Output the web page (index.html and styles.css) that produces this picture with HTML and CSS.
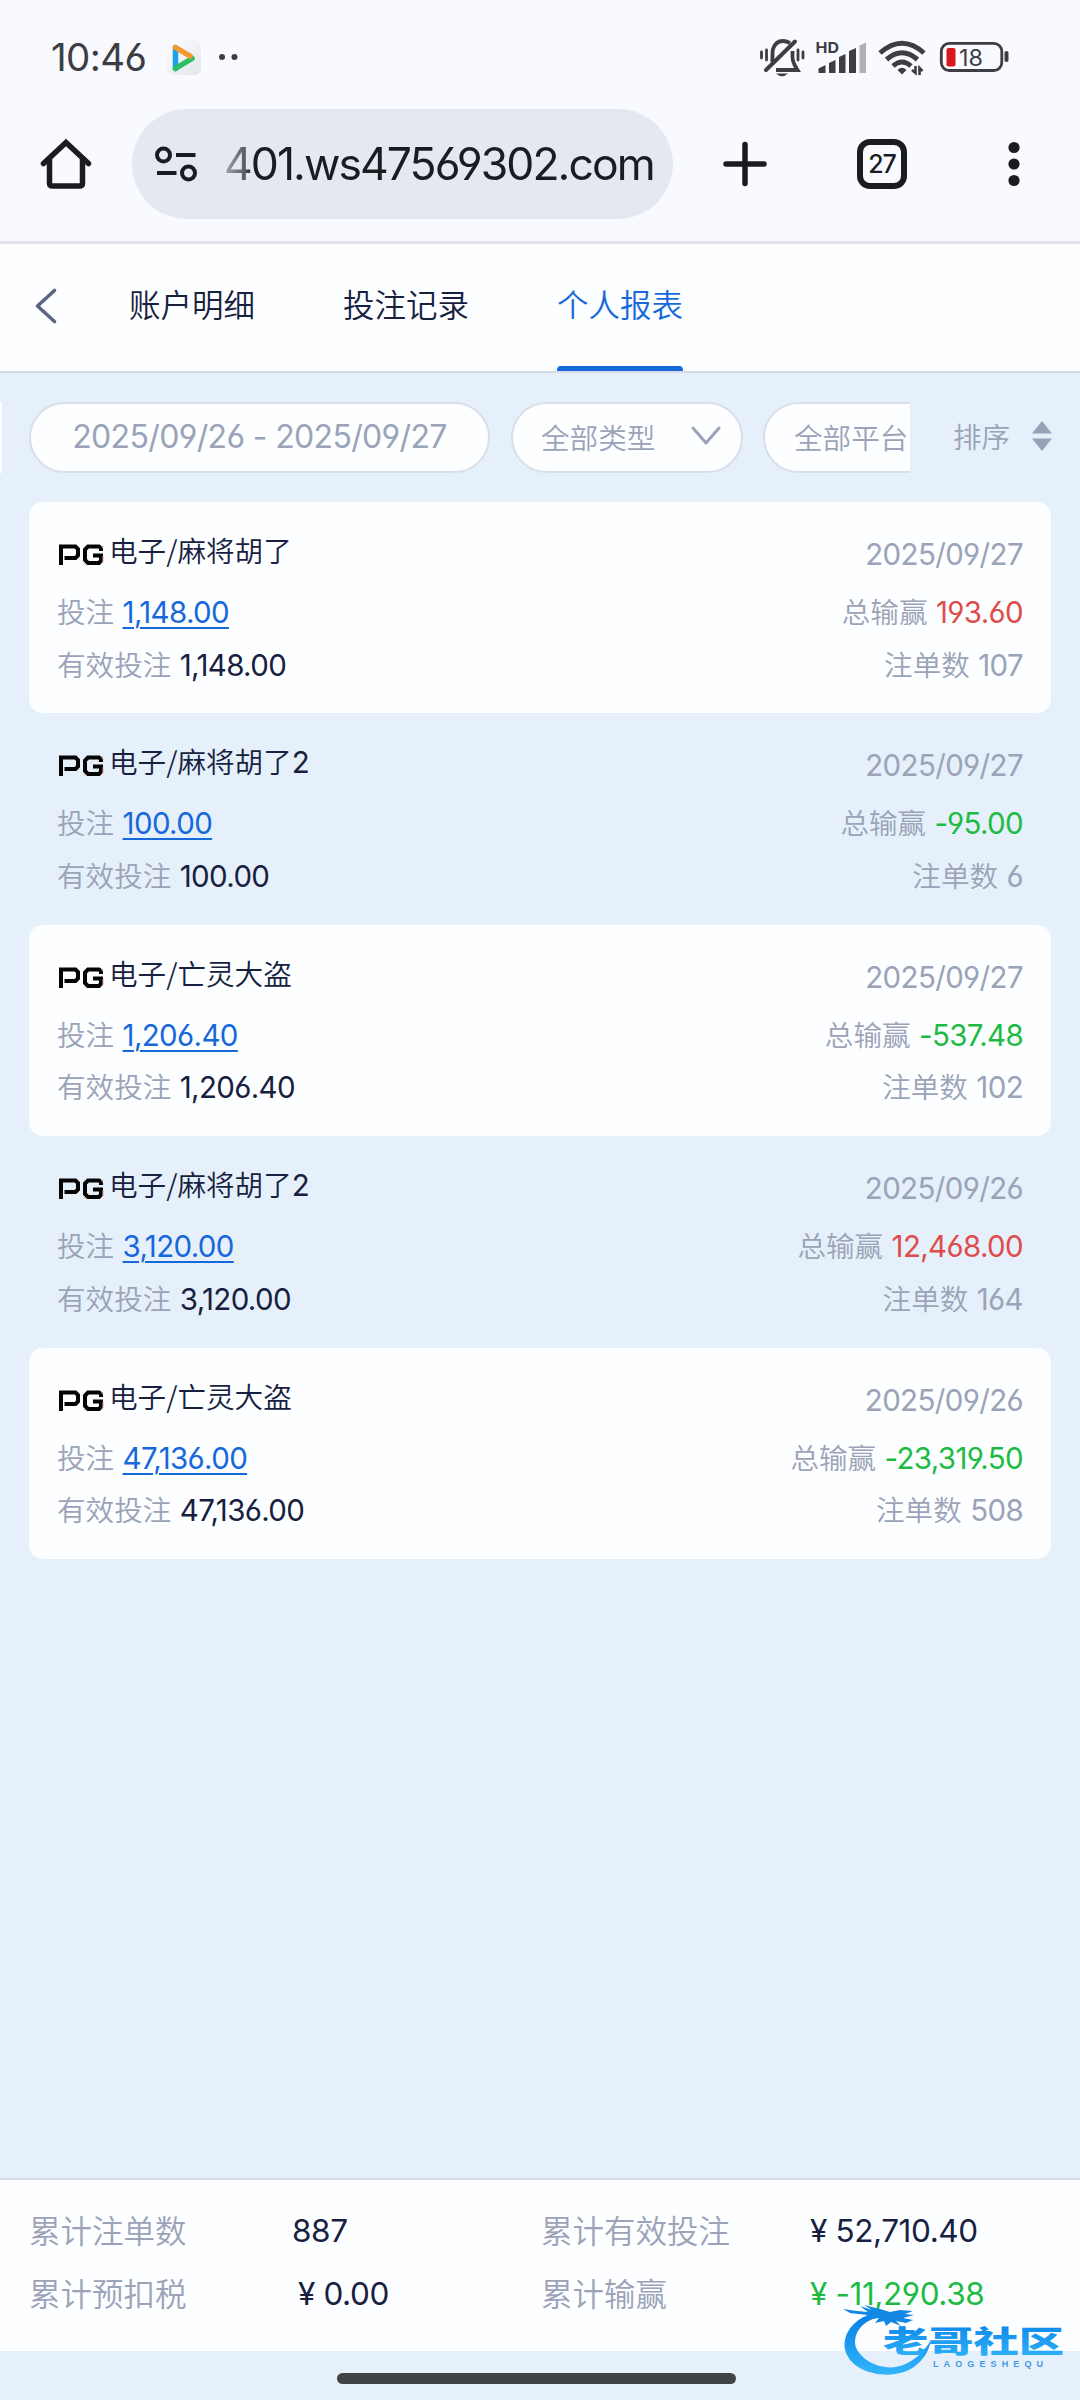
FILE: index.html
```html
<!DOCTYPE html>
<html lang="zh-CN">
<head>
<meta charset="utf-8">
<title>个人报表</title>
<link rel="stylesheet" href="styles.css">
</head>
<body>
<svg class="defs" width="0" height="0">
  <symbol id="pg" viewBox="0 0 46 22">
    <path d="M3 21V2.500H17.500L20 5V11.500L17.500 14H6.500" fill="none" stroke="#050505" stroke-width="4"/>
    <path d="M43 7V4L41 2.500H30L27 5.500V16L30 19H41L43 16.500V11.500H35" fill="none" stroke="#050505" stroke-width="4"/>
    <path d="M43.500 2.500l1.500 2M45 12v6l-3 3M26 19l3 2" fill="none" stroke="#e9a08c" stroke-width="1"/>
  </symbol>
</svg>

<div class="status">
  <span class="time">10:46</span>
  <svg class="status-left" width="76" height="40" viewBox="164 37 76 40">
    <defs><linearGradient id="tile" x1="0" y1="0" x2="1" y2="1"><stop offset="0" stop-color="#fdfdff"/><stop offset="1" stop-color="#e3e6ea"/></linearGradient></defs>
    <rect x="166" y="40" width="35" height="35" rx="7" fill="url(#tile)"/>
    <path d="M175.500 48V68.500" stroke="#1da0ea" stroke-width="5.500" stroke-linecap="round"/>
    <path d="M175.500 68.500L192 58.500" stroke="#2dbf63" stroke-width="5.500" stroke-linecap="round"/>
    <path d="M175.500 47.500L190 56" stroke="#f29a30" stroke-width="5.500" stroke-linecap="round"/>
    <circle cx="222" cy="57" r="3" fill="#3c3e44"/><circle cx="234.500" cy="57" r="3" fill="#3c3e44"/>
  </svg>
  <svg class="status-right" width="260" height="44" viewBox="755 36 260 44" fill="none" stroke="#3c3e44">
    <path d="M772 62C773 59 772 52 773 49C775 43 778 41 783 41C786 41 788 42 790 43M792.500 51C792 60 793 63 797.500 70H776" stroke-width="3.800"/>
    <path d="M766 70L795 41.500" stroke-width="4" stroke-linecap="round"/>
    <path d="M776 73.500H788Q782 79 776 73.500Z" fill="#3c3e44" stroke="none"/>
    <path d="M761.500 52V58M766.500 50V60M798 50V60M803 52V58" stroke-width="2.800" stroke-linecap="round"/>
    <text x="815.500" y="53" textLength="23.500" lengthAdjust="spacingAndGlyphs" class="hd">HD</text>
    <path d="M818.500 68.500L825.500 65V73H818.500ZM829 63L835.500 60V73H829ZM839 57L845.500 54V73H839ZM849 51L856 48V73H849Z" fill="#3c3e44" stroke="none"/>
    <path d="M859.500 45.500L866 42.500V73H859.500Z" fill="#b0b1b5" stroke="none"/>
    <path d="M880 53Q902 33.500 924 53M886.500 59.500Q902 46 917.500 59.500M893 66Q902 58 911 66" stroke-width="5"/>
    <path d="M897.500 70Q902 65.500 906.500 70L902 74.500Z" fill="#3c3e44" stroke="none"/>
    <path d="M912 70L915.500 73V66M922.500 71L919.500 68V75" stroke-width="2.600"/>
    <rect x="941.300" y="43.300" width="60.500" height="27.200" rx="8" stroke-width="2.800"/>
    <path d="M1006.500 53V60" stroke-width="4" stroke-linecap="round"/>
    <rect x="946.500" y="48" width="9" height="18.500" rx="2" fill="#d9161c" stroke="none"/>
    <text x="959" y="65.500" textLength="24" lengthAdjust="spacingAndGlyphs" class="batt">18</text>
  </svg>
</div>

<div class="browser">
  <svg class="home" width="56" height="56" viewBox="38 136 56 56" fill="none" stroke="#1b1c20" stroke-width="5.500">
    <path d="M43.500 163.500L66 142.500L88.500 163.500" stroke-linecap="round"/>
    <path d="M49.500 159V183Q49.500 186 52.500 186H79.500Q82.500 186 82.500 183V159"/>
  </svg>
  <div class="address">
    <svg width="44" height="40" viewBox="154 144 44 40" fill="none" stroke="#1b1c20" stroke-width="4">
      <circle cx="163.500" cy="155" r="6.500"/><circle cx="188.500" cy="173" r="6.500"/>
      <path d="M176 155H195.500M157 173H176.500"/>
    </svg>
    <span class="url">401.ws47569302.com</span>
  </div>
  <svg class="plus" width="46" height="46" viewBox="0 0 46 46" fill="none" stroke="#1b1c20" stroke-width="5.500" stroke-linecap="round"><path d="M23 3.500V42.500M4 23H42"/></svg>
  <span class="tab-count">27</span>
  <svg class="more" width="12" height="46" viewBox="0 0 12 46" fill="#1b1c20"><circle cx="6" cy="6.500" r="5.600"/><circle cx="6" cy="23" r="5.600"/><circle cx="6" cy="39.500" r="5.600"/></svg>
</div>

<nav class="tabs">
  <svg class="back" width="24" height="38" viewBox="0 0 24 38" fill="none" stroke="#5c6684" stroke-width="3.600" stroke-linecap="round" stroke-linejoin="round"><path d="M20.500 3.500L3.500 19L20.500 34.500"/></svg>
  <span class="tab">账户明细</span>
  <span class="tab">投注记录</span>
  <span class="tab active">个人报表</span>
</nav>

<div class="filters">
  <div class="scroller">
    <div class="pill previous"></div>
    <div class="pill range">2025/09/26 - 2025/09/27</div>
    <div class="pill type">全部类型
      <svg width="32" height="22" viewBox="0 0 32 22" fill="none" stroke="#9aa3b8" stroke-width="3" stroke-linecap="round" stroke-linejoin="round"><path d="M3 3L16 18L29 3"/></svg>
    </div>
    <div class="pill platform">全部平台</div>
  </div>
  <div class="sort">排序
    <svg width="20" height="30" viewBox="0 0 20 30" fill="#97a2b9"><path d="M10 0L20 12.500H0ZM10 30L20 17.500H0Z"/></svg>
  </div>
</div>

<main class="records">
  <section class="record">
    <div class="line title"><span class="name"><svg class="pg"><use href="#pg"/></svg>电子/麻将胡了</span><span class="num">2025/09/27</span></div>
    <div class="line"><span>投注 <a class="num">1,148.00</a></span><span>总输赢 <b class="num red">193.60</b></span></div>
    <div class="line last"><span>有效投注 <b class="num">1,148.00</b></span><span>注单数 <i class="num">107</i></span></div>
  </section>
  <section class="record">
    <div class="line title"><span class="name"><svg class="pg"><use href="#pg"/></svg>电子/麻将胡了<i class="num">2</i></span><span class="num">2025/09/27</span></div>
    <div class="line"><span>投注 <a class="num">100.00</a></span><span>总输赢 <b class="num green">-95.00</b></span></div>
    <div class="line last"><span>有效投注 <b class="num">100.00</b></span><span>注单数 <i class="num">6</i></span></div>
  </section>
  <section class="record">
    <div class="line title"><span class="name"><svg class="pg"><use href="#pg"/></svg>电子/亡灵大盗</span><span class="num">2025/09/27</span></div>
    <div class="line"><span>投注 <a class="num">1,206.40</a></span><span>总输赢 <b class="num green">-537.48</b></span></div>
    <div class="line last"><span>有效投注 <b class="num">1,206.40</b></span><span>注单数 <i class="num">102</i></span></div>
  </section>
  <section class="record">
    <div class="line title"><span class="name"><svg class="pg"><use href="#pg"/></svg>电子/麻将胡了<i class="num">2</i></span><span class="num">2025/09/26</span></div>
    <div class="line"><span>投注 <a class="num">3,120.00</a></span><span>总输赢 <b class="num red">12,468.00</b></span></div>
    <div class="line last"><span>有效投注 <b class="num">3,120.00</b></span><span>注单数 <i class="num">164</i></span></div>
  </section>
  <section class="record">
    <div class="line title"><span class="name"><svg class="pg"><use href="#pg"/></svg>电子/亡灵大盗</span><span class="num">2025/09/26</span></div>
    <div class="line"><span>投注 <a class="num">47,136.00</a></span><span>总输赢 <b class="num green">-23,319.50</b></span></div>
    <div class="line last"><span>有效投注 <b class="num">47,136.00</b></span><span>注单数 <i class="num">508</i></span></div>
  </section>
</main>

<footer class="totals">
  <span>累计注单数</span><b class="num">887</b><span>累计有效投注</span><b class="num">¥ 52,710.40</b>
  <span>累计预扣税</span><b class="num indent">¥ 0.00</b><span>累计输赢</span><b class="num green">¥ -11,290.38</b>
</footer>
<div class="gesture"><div class="handle"></div></div>

<svg class="watermark" width="230" height="76" viewBox="840 2302 230 76">
  <defs>
    <linearGradient id="blue" x1="0" y1="0" x2="0" y2="1"><stop offset="0" stop-color="#087fe6"/><stop offset="1" stop-color="#31b5fb"/></linearGradient>
  </defs>
  <path d="M868 2315C848 2323 840 2341 847 2355C857 2375 893 2381 914 2367C923 2360 929 2352 931 2340C924 2352 912 2364 896 2367C876 2370 855 2356 855 2342C855 2332 862 2322 876 2318Z" fill="url(#blue)"/>
  <path d="M843 2309L857 2311L868 2312L860 2306L872 2310L864 2305L880 2309L890 2312L900 2310L913 2311L905 2314L914 2315L903 2318L913 2320L906 2323L896 2321L901 2326L891 2322L886 2326L884 2321L875 2323L879 2318L864 2320L867 2315L850 2313Z" fill="#1287e4"/>
  <text class="brand" x="0" y="0" transform="translate(883 2351.500)" textLength="181" lengthAdjust="spacingAndGlyphs" fill="url(#blue)">老哥社区</text>
  <text class="brand-latin" x="933" y="2367" textLength="110" fill="#3f9ae6">LAOGESHEQU</text>
</svg>
</body>
</html>
```
FILE: styles.css
```css
* { box-sizing: border-box; }
body {
  margin: 0;
  width: 1080px;
  height: 2400px;
  overflow: hidden;
  position: relative;
  display: flex;
  flex-direction: column;
  background: #e6f0fa;
  color: #9aa3b8;
  font: 350 28.6px/40px "Noto Sans CJK SC", sans-serif;
}
b, i { font-weight: inherit; font-style: normal; }
svg { display: block; flex: none; }
.defs { position: absolute; }
.num {
  font-family: Inter, "Noto Sans CJK SC", sans-serif;
  font-weight: 380;
  font-size: 29.5px;
  letter-spacing: -0.65px;
  font-feature-settings: "cv03", "cv04";
}

.status { height: 92px; display: flex; align-items: flex-start; background: #f9faff; padding-left: 51px; }
.time { width: 113px; padding-top: 37px; font: 400 38.500px/40px Inter, sans-serif; letter-spacing: -0.6px; color: #3c3e44; font-feature-settings: "cv03", "cv04"; }
.status-left { margin-top: 37px; }
.status-right { margin: 36px 65px 0 auto; }
.hd { font: 700 15px Inter, sans-serif; fill: #3c3e44; stroke: none; }
.batt { font: 400 23px Inter, sans-serif; fill: #3c3e44; stroke: none; }

.browser { height: 152px; display: flex; align-items: center; padding: 0 60px 5px 38px; background: #f9faff; border-bottom: 3px solid #dfe0e8; }
.home { margin-top: -1px; }
.address { width: 541px; height: 110px; margin: 0 49px 0 38px; padding-left: 22px; border-radius: 55px; background: #e4e8f1; display: flex; align-items: center; gap: 26px; }
.url { font: 390 44.500px/60px Inter, sans-serif; letter-spacing: -1.95px; color: transparent; background: linear-gradient(90deg, #a4a7af, #5d6068 20px, #1b1c20 28px); background-clip: text; -webkit-background-clip: text; font-feature-settings: "cv03", "cv04"; }
.tab-count { margin-left: 89px; width: 50px; height: 50px; border: 6px solid #1b1c20; border-radius: 13px; text-align: center; font: 500 25px/38px Inter, sans-serif; letter-spacing: -1px; color: #1b1c20; }
.more { margin-left: auto; margin-right: 0; }

.tabs { height: 129px; display: flex; align-items: center; padding-left: 34px; background: #fcfeff; border-bottom: 2px solid #d7dde8; }
.back { margin: -3px 71px 0 0; }
.tab { height: 127px; margin-right: 88px; font-size: 31.500px; line-height: 119px; color: #17213f; position: relative; }
.tab.active { color: #1768db; }
.tab.active::after { content: ""; position: absolute; left: 0; right: 0; bottom: 0; height: 5px; border-radius: 4px 4px 0 0; background: #1768db; }

.filters { height: 128px; display: flex; align-items: center; }
.scroller { width: 910px; height: 71px; display: flex; overflow: hidden; }
.pill { flex: none; height: 71px; border: 2px solid #d9deea; border-radius: 36px; background: #fcfeff; display: flex; align-items: center; line-height: 63px; padding-bottom: 2px; }
.previous { width: 42px; margin: 0 27px 0 -40px; border-radius: 0; border-color: #fcfeff; }
.range { width: 461px; justify-content: center; font: 380 32px/68px Inter, sans-serif; letter-spacing: -0.65px; padding-bottom: 0; font-feature-settings: "cv03", "cv04"; }
.type { width: 232px; margin: 0 20px 0 21px; padding: 0 19px 2px 28px; justify-content: space-between; }
.platform { width: 232px; padding-left: 29px; }
.sort { flex: 1; display: flex; justify-content: space-between; align-items: center; padding: 0 28px 3px 43px; }

.records { flex: 1; padding: 1px 29px 0; }
.record { height: 211.400px; padding: 29px 28px 0 28px; border-radius: 14px; }
.record:nth-child(odd) { background: #fcfeff; }
.line { display: flex; justify-content: space-between; height: 52.500px; line-height: 41px; white-space: pre; word-spacing: 2px; }
.title { height: 59px; line-height: 40px; }
.title > .num { padding-top: 3px; }
.name { display: flex; color: #17213f; margin-top: -1px; }
.name .num { padding-top: 1px; }
.pg { width: 46px; height: 22px; margin: 14px 5px 0 1px; }
.line b { color: #17213f; }
.line a { color: #1768db; text-decoration: underline; text-decoration-thickness: 2px; text-underline-offset: 4px; }
.line .red { color: #df4c4c; }

.totals { height: 173px; padding: 19px 29px 0; display: grid; grid-template-columns: 263px 249px 269px 1fr; grid-auto-rows: 63px; line-height: 61px; background: #fcfeff; border-top: 2px solid #d7dde8; font-size: 31.500px; }
.totals .num { font-size: 31.500px; letter-spacing: -0.4px; color: #17213f; padding-top: 1px; }
.totals .indent { padding-left: 6px; }
.line .green, .totals .green { color: #1dbb43; }
.gesture { height: 49px; display: flex; justify-content: center; align-items: flex-start; padding: 22px 7px 0 0; }
.handle { width: 399px; height: 11px; border-radius: 6px; background: #414447; }
.watermark { position: absolute; left: 840px; top: 2302px; }
.brand { font: 900 30px "Noto Sans CJK SC", sans-serif; }
.brand-latin { font: 700 9px "Liberation Sans", sans-serif; }
```
